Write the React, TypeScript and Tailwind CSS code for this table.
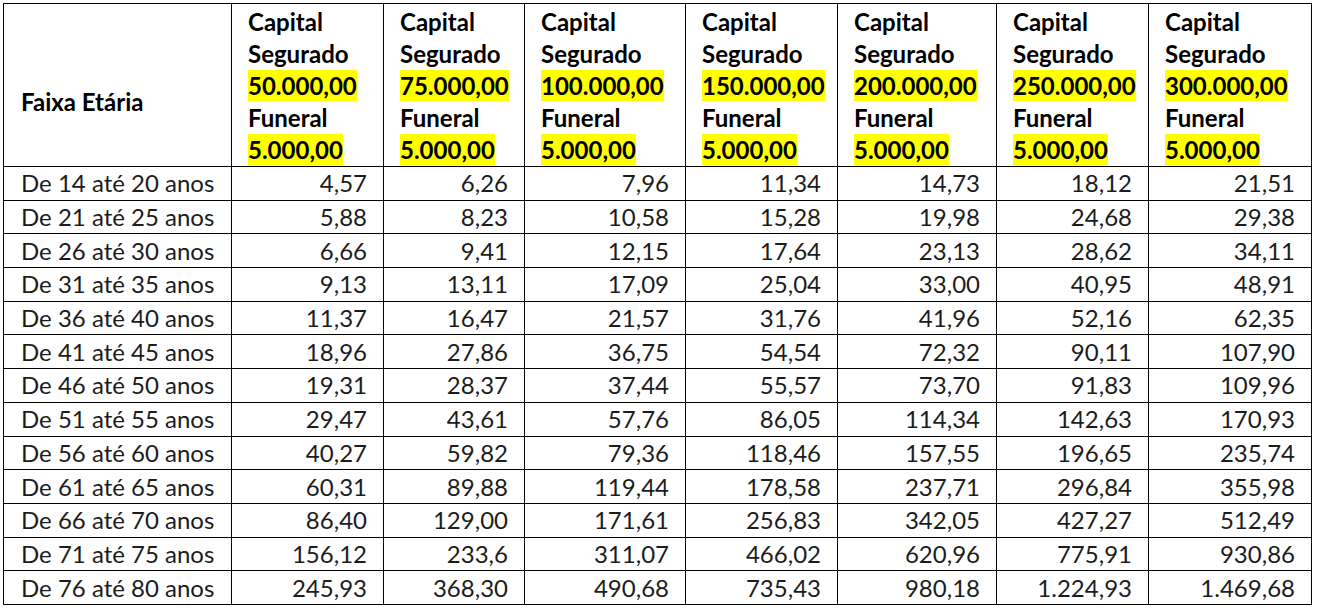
import React from 'react'

const capitals = ['50.000,00', '75.000,00', '100.000,00', '150.000,00', '200.000,00', '250.000,00', '300.000,00']

const rows: string[][] = [
  ['De 14 até 20 anos', '4,57', '6,26', '7,96', '11,34', '14,73', '18,12', '21,51'],
  ['De 21 até 25 anos', '5,88', '8,23', '10,58', '15,28', '19,98', '24,68', '29,38'],
  ['De 26 até 30 anos', '6,66', '9,41', '12,15', '17,64', '23,13', '28,62', '34,11'],
  ['De 31 até 35 anos', '9,13', '13,11', '17,09', '25,04', '33,00', '40,95', '48,91'],
  ['De 36 até 40 anos', '11,37', '16,47', '21,57', '31,76', '41,96', '52,16', '62,35'],
  ['De 41 até 45 anos', '18,96', '27,86', '36,75', '54,54', '72,32', '90,11', '107,90'],
  ['De 46 até 50 anos', '19,31', '28,37', '37,44', '55,57', '73,70', '91,83', '109,96'],
  ['De 51 até 55 anos', '29,47', '43,61', '57,76', '86,05', '114,34', '142,63', '170,93'],
  ['De 56 até 60 anos', '40,27', '59,82', '79,36', '118,46', '157,55', '196,65', '235,74'],
  ['De 61 até 65 anos', '60,31', '89,88', '119,44', '178,58', '237,71', '296,84', '355,98'],
  ['De 66 até 70 anos', '86,40', '129,00', '171,61', '256,83', '342,05', '427,27', '512,49'],
  ['De 71 até 75 anos', '156,12', '233,6', '311,07', '466,02', '620,96', '775,91', '930,86'],
  ['De 76 até 80 anos', '245,93', '368,30', '490,68', '735,43', '980,18', '1.224,93', '1.469,68'],
]

// border-to-border widths measured off the sheet
const colWidths = ['w-[228px]', 'w-[152px]', 'w-[141px]', 'w-[161px]', 'w-[152px]', 'w-[159px]', 'w-[152px]', 'w-[163px]']

export default function App() {
  return (
    <div className="bg-white min-h-screen p-[3px] font-['Lato',sans-serif] text-[24px] text-[#1c1c1c]">
      <table className="table-fixed border-collapse w-[1308px]">
        <colgroup>
          {colWidths.map((w, i) => (
            <col key={i} className={w} />
          ))}
        </colgroup>
        <thead>
          <tr className="h-[163px]">
            <th className="border border-black text-left align-top pl-[17px] pt-[82px] leading-[32px] font-bold text-black">
              Faixa Etária
            </th>
            {capitals.map(c => (
              <th key={c} className="border border-black text-left align-top pl-[16px] pt-[2px] leading-[32px] font-bold text-black whitespace-nowrap">
                <div>Capital</div>
                <div>Segurado</div>
                <div><span className="inline-block bg-[#ffff00] h-[31px]">{c}</span></div>
                <div>Funeral</div>
                <div><span className="inline-block bg-[#ffff00] h-[31px]">5.000,00</span></div>
              </th>
            ))}
          </tr>
        </thead>
        <tbody>
          {rows.map(r => (
            <tr key={r[0]} className="h-[33.7px]">
              {r.map((v, i) => (
                <td
                  key={i}
                  className={
                    i === 0
                      ? 'border border-black pl-[17px] leading-none align-middle whitespace-nowrap'
                      : 'border border-black pr-[16px] text-right leading-none align-middle'
                  }
                >
                  {v}
                </td>
              ))}
            </tr>
          ))}
        </tbody>
      </table>
    </div>
  )
}
